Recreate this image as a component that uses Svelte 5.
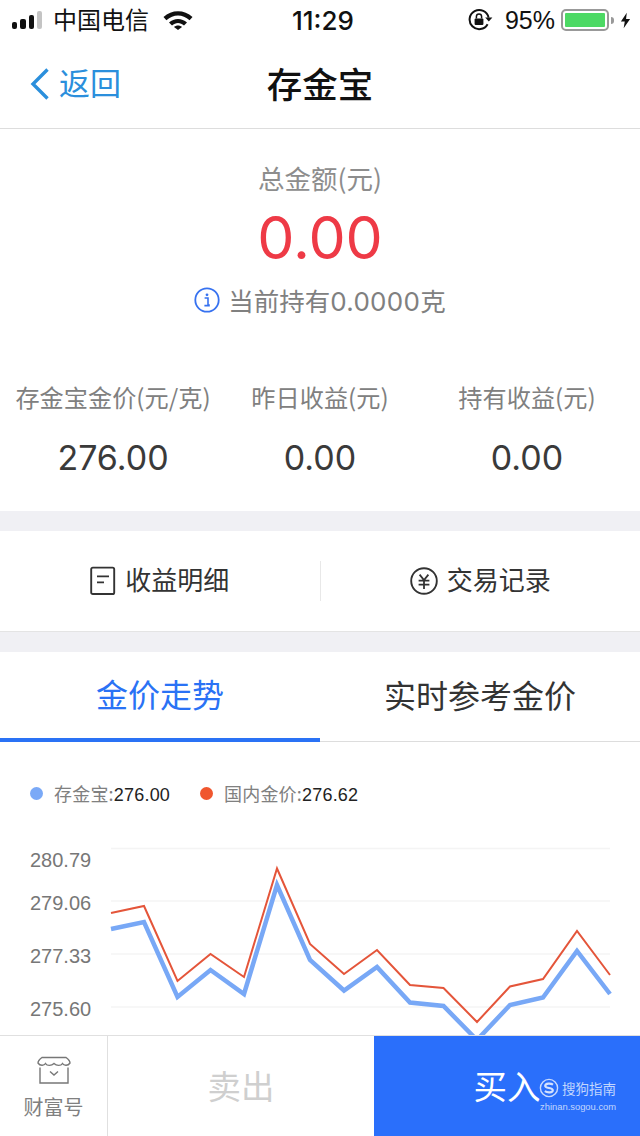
<script>
  const stats = [
    { label: '存金宝金价(元/克)', value: '276.00' },
    { label: '昨日收益(元)', value: '0.00' },
    { label: '持有收益(元)', value: '0.00' }
  ];

  const xs = [111, 144, 177.5, 210.5, 244, 277, 310, 344, 377, 410, 443.5, 477, 510, 543, 577, 610];
  const red = [913, 906, 981, 954, 977, 868.5, 944, 974, 950, 985, 988, 1022, 986.5, 979, 931, 975];
  const blue = [929, 922, 997, 970, 994, 885, 960, 990.5, 967, 1002.5, 1006, 1040, 1005, 997.5, 951, 994];
  const top = 830;

  const toPoints = (ys) => ys.map((y, i) => `${xs[i]},${y - top}`).join(' ');
  const grid = [848.5, 901, 954, 1007];
  const ticks = [
    { text: '280.79', y: 860 },
    { text: '279.06', y: 903 },
    { text: '277.33', y: 956 },
    { text: '275.60', y: 1009 }
  ];
</script>

<div class="page">
  <div class="status">
    <div class="status-left">
      <div class="signal">
        <i style="height: 7px"></i><i style="height: 10px"></i><i style="height: 14px"></i><i class="off" style="height: 18px"></i>
      </div>
      <span class="carrier">中国电信</span>
      <svg class="wifi" width="30" height="20" viewBox="0 0 30 20">
        <path d="M0.5 7C8.5 -0.6 21.5 -0.6 29.5 7L26.6 10.2C19.6 3.8 10.4 3.8 3.4 10.2Z" fill="#111" />
        <path d="M6 12.6C11 7.8 19 7.8 24 12.6L21 15.6C17.4 12.2 12.6 12.2 9 15.6Z" fill="#111" />
        <path d="M11 17C13.4 15 16.6 15 19 17L15 20Z" fill="#111" />
      </svg>
    </div>
    <span class="time">11:29</span>
    <div class="status-right">
      <svg width="26" height="24" viewBox="0 0 26 24">
        <path d="M19.6 16.2A9.6 9.6 0 1 1 20.6 9.6" fill="none" stroke="#111" stroke-width="2" />
        <path d="M17.2 9.4H24.4L20.8 13.6Z" fill="#111" />
        <rect x="6.6" y="10.4" width="8.8" height="6.6" rx="1" fill="#111" />
        <path d="M8.4 10.6V8.6A2.6 2.6 0 0 1 13.6 8.6V10.6" fill="none" stroke="#111" stroke-width="1.5" />
      </svg>
      <span class="percent">95%</span>
      <div class="battery"><div class="level"></div></div>
      <div class="nub"></div>
      <svg width="11" height="19" viewBox="0 0 12 18">
        <path d="M7.4 0.5L1 10.2H5.2L4 17.5L11 7.4H6.6Z" fill="#111" />
      </svg>
    </div>
  </div>

  <div class="nav">
    <div class="back">
      <svg width="22" height="34" viewBox="0 0 22 34">
        <path d="M18.5 2.5L4 17L18.5 31.5" fill="none" stroke="#2b8fdc" stroke-width="3.4" />
      </svg>
      <span>返回</span>
    </div>
    <h1>存金宝</h1>
  </div>

  <section class="summary">
    <div class="total-label">总金额(元)</div>
    <div class="total">0.00</div>
    <div class="holding">
      <svg width="26" height="26" viewBox="0 0 26 26">
        <circle cx="13" cy="13" r="11.7" fill="none" stroke="#3772f0" stroke-width="1.8" />
        <circle cx="13" cy="7.8" r="1.4" fill="#3772f0" />
        <path d="M10.6 11H14V18H15.8M10.4 18.6H15.8" fill="none" stroke="#3772f0" stroke-width="1.6" />
      </svg>
      <span>当前持有<span class="num">0.0000</span>克</span>
    </div>
    <div class="stats">
      {#each stats as stat}
        <div class="stat">
          <div class="stat-label">{stat.label}</div>
          <div class="stat-value">{stat.value}</div>
        </div>
      {/each}
    </div>
  </section>

  <section class="actions">
    <div class="action">
      <svg width="26" height="30" viewBox="0 0 26 30">
        <rect x="1.2" y="1.6" width="23" height="26.4" rx="1.6" fill="none" stroke="#333" stroke-width="1.9" />
        <path d="M7 10.4H19M7 16.4H14" fill="none" stroke="#333" stroke-width="1.9" />
      </svg>
      <span>收益明细</span>
    </div>
    <div class="action divided">
      <svg width="28" height="28" viewBox="0 0 28 28">
        <circle cx="14" cy="14" r="12.8" fill="none" stroke="#333" stroke-width="1.9" />
        <path d="M9.6 7.6L14 13L18.4 7.6M8.6 13.6H19.4M8.6 17.6H19.4M14 13V22" fill="none" stroke="#333" stroke-width="1.8" />
      </svg>
      <span>交易记录</span>
    </div>
  </section>

  <section class="panel">
    <div class="tabs">
      <div class="tab active">金价走势</div>
      <div class="tab">实时参考金价</div>
    </div>

    <div class="legend">
      <div class="legend-item first">
        <i class="dot" style="background: #7aa9f7"></i>
        <span>存金宝:<b>276.00</b></span>
      </div>
      <div class="legend-item">
        <i class="dot" style="background: #f0562e"></i>
        <span>国内金价:<b>276.62</b></span>
      </div>
    </div>

    <svg class="chart" width="640" height="230" viewBox="0 0 640 230">
      {#each grid as y}
        <line x1="111" x2="610" y1={y - top} y2={y - top} stroke="#f4f4f4" stroke-width="1.4" />
      {/each}
      {#each ticks as tick}
        <text x="30" y={tick.y + 7 - top} class="tick">{tick.text}</text>
      {/each}
      <polyline points={toPoints(blue)} fill="none" stroke="#78a8f6" stroke-width="4.5" />
      <polyline points={toPoints(red)} fill="none" stroke="#e4553a" stroke-width="2" />
    </svg>
  </section>

  <div class="bottom">
    <div class="wealth">
      <svg width="34" height="28" viewBox="0 0 34 28">
        <path d="M5 1.5H29C31 3 33 5 33 7C31 10 27 10 25.5 7.5C24 10 19.5 10 17 7.5C14.5 10 10 10 8.5 7.5C7 10 3 10 1 7C1 5 3 3 5 1.5Z" fill="none" stroke="#777" stroke-width="1.4" />
        <path d="M3 11.5V27H31V11.5" fill="none" stroke="#777" stroke-width="1.4" />
        <path d="M13 15.5L17 19L21 15.5" fill="none" stroke="#777" stroke-width="1.4" />
      </svg>
      <span>财富号</span>
    </div>
    <div class="sell">卖出</div>
    <div class="buy">买入</div>
  </div>

  <div class="watermark">
    <div class="mark-top">
      <svg width="20" height="20" viewBox="0 0 20 20">
        <circle cx="10" cy="10" r="8.6" fill="none" stroke="#fff" stroke-width="1.4" opacity="0.75" />
        <path d="M14 6.6C11.5 5 6.4 5.2 6.2 7.8C6 10.6 13.8 9.4 13.8 12.2C13.8 15 8.4 15 5.8 13.2" fill="none" stroke="#fff" stroke-width="2.2" opacity="0.8" />
      </svg>
      <span>搜狗指南</span>
    </div>
    <div class="mark-url">zhinan.sogou.com</div>
  </div>
</div>

<style>
  :global(body) {
    background: #fff;
  }
  .page {
    position: relative;
    width: 640px;
    height: 1136px;
    overflow: hidden;
    background: #fff;
    font-family: "Liberation Sans", "Noto Sans CJK SC", sans-serif;
  }

  .status {
    height: 40px;
    display: flex;
    align-items: center;
    justify-content: space-between;
    position: relative;
    color: #111;
  }
  .status-left {
    display: flex;
    align-items: center;
    margin-left: 12px;
  }
  .signal {
    display: flex;
    align-items: flex-end;
    gap: 3px;
    height: 18px;
    width: 33px;
  }
  .signal i {
    width: 5.3px;
    border-radius: 2px;
    background: #111;
  }
  .signal i.off {
    background: #c4c4c4;
  }
  .carrier {
    margin-left: 8px;
    padding-bottom: 2px;
    font: 24px "Noto Sans CJK SC", sans-serif;
    line-height: 34px;
  }
  .wifi {
    margin-left: 14px;
  }
  .time {
    position: absolute;
    left: 292px;
    font: 500 26px Inter, sans-serif;
  }
  .status-right {
    display: flex;
    align-items: center;
    margin-right: 9px;
  }
  .percent {
    margin-left: 11px;
    font: 25px "Liberation Sans", sans-serif;
  }
  .battery {
    margin-left: 6px;
    width: 48px;
    height: 22px;
    box-sizing: border-box;
    border: 2px solid #999;
    border-radius: 5px;
    padding: 2px;
  }
  .level {
    height: 100%;
    width: 40px;
    background: #4cd964;
    border-radius: 1px;
  }
  .nub {
    width: 3px;
    height: 7px;
    margin: 0 6px 0 2px;
    background: #999;
    border-radius: 0 3px 3px 0;
  }

  .nav {
    height: 88px;
    display: flex;
    align-items: center;
    justify-content: center;
    position: relative;
    border-bottom: 1px solid #ddd;
  }
  .back {
    position: absolute;
    left: 29px;
    display: flex;
    align-items: center;
    gap: 8px;
    color: #2b8fdc;
    font: 31px "Noto Sans CJK SC", sans-serif;
  }
  .back span {
    line-height: 34px;
    padding-bottom: 4px;
  }
  h1 {
    margin: 0;
    padding-bottom: 4px;
    font: 500 35.5px "Noto Sans CJK SC", sans-serif;
    color: #111;
  }

  .summary {
    height: 382px;
    display: flex;
    flex-direction: column;
    align-items: center;
    border-bottom: 20px solid #f0f0f4;
  }
  .total-label {
    margin-top: 30px;
    font: 26.5px/38px "Noto Sans CJK SC", sans-serif;
    color: #8d8d8d;
  }
  .total {
    font: 59px/72px Inter, sans-serif;
    color: #ee3a46;
    margin-top: 5px;
  }
  .holding {
    margin-top: 7px;
    display: flex;
    align-items: center;
    gap: 8px;
    font: 25.5px/38px "Noto Sans CJK SC", sans-serif;
    color: #808080;
  }
  .num {
    font: 26px Inter, sans-serif;
    letter-spacing: 0.3px;
  }
  .stats {
    margin-top: 59px;
    width: 100%;
    display: grid;
    grid-template-columns: 226px 188px 226px;
    text-align: center;
  }
  .stat-label {
    font: 24.2px/38px "Noto Sans CJK SC", sans-serif;
    color: #808080;
  }
  .stat-value {
    margin-top: 21px;
    font: 34px/42px Inter, sans-serif;
    color: #3a3a3a;
  }

  .actions {
    height: 100px;
    display: flex;
    align-items: center;
    border-bottom: 1px solid #e4e4e4;
  }
  .action {
    flex: 1;
    height: 40px;
    display: flex;
    align-items: center;
    justify-content: center;
    gap: 9px;
    font: 26px "Noto Sans CJK SC", sans-serif;
    color: #333;
  }
  .action span {
    padding-bottom: 5px;
  }
  .action.divided {
    border-left: 1px solid #e8e8e8;
  }

  .panel {
    border-top: 20px solid #f0f0f4;
  }
  .tabs {
    display: flex;
    height: 90px;
    border-bottom: 1px solid #ddd;
    box-sizing: border-box;
  }
  .tab {
    flex: 1;
    display: flex;
    align-items: center;
    justify-content: center;
    padding-bottom: 5px;
    font: 32px "Noto Sans CJK SC", sans-serif;
    color: #333;
    box-sizing: border-box;
  }
  .tab.active {
    color: #2a72f5;
    border-bottom: 4px solid #2a72f5;
    padding-bottom: 4px;
    height: 90px;
  }
  .legend {
    margin-top: 36px;
    padding-left: 30px;
    display: flex;
    height: 30px;
    align-items: center;
  }
  .legend-item {
    display: flex;
    align-items: center;
    gap: 11px;
    font: 18px "Noto Sans CJK SC", sans-serif;
    letter-spacing: 0.2px;
    color: #808080;
  }
  .legend-item.first {
    width: 170px;
  }
  .legend-item b {
    font: 18px "Liberation Sans", sans-serif;
    color: #222;
  }
  .dot {
    width: 13px;
    height: 13px;
    border-radius: 50%;
  }
  .chart {
    display: block;
    margin-top: 22px;
  }
  .tick {
    font: 20px "Liberation Sans", sans-serif;
    fill: #777;
  }

  .bottom {
    position: absolute;
    left: 0;
    right: 0;
    bottom: 0;
    height: 101px;
    box-sizing: border-box;
    display: grid;
    grid-template-columns: 108px 266px 266px;
    background: #fff;
    border-top: 1px solid #e0e0e0;
  }
  .wealth {
    display: flex;
    flex-direction: column;
    align-items: center;
    justify-content: center;
    gap: 7.5px;
    padding-top: 5px;
    border-right: 1px solid #e0e0e0;
    font: 20px "Noto Sans CJK SC", sans-serif;
    color: #808080;
  }
  .sell,
  .buy {
    display: flex;
    align-items: center;
    justify-content: center;
    padding-bottom: 4px;
    font: 33.5px "Noto Sans CJK SC", sans-serif;
  }
  .sell {
    color: #cfcfcf;
  }
  .buy {
    color: #fff;
    background: #2a6ffb;
  }

  .watermark {
    position: absolute;
    left: 539px;
    top: 1078px;
    color: rgba(255, 255, 255, 0.72);
  }
  .mark-top {
    display: flex;
    align-items: center;
    gap: 3px;
    font: 13.5px/20px "Noto Sans CJK SC", sans-serif;
  }
  .mark-url {
    margin-top: 2px;
    margin-left: 1px;
    font: 9.4px/14px "Liberation Sans", sans-serif;
    white-space: nowrap;
  }
</style>
